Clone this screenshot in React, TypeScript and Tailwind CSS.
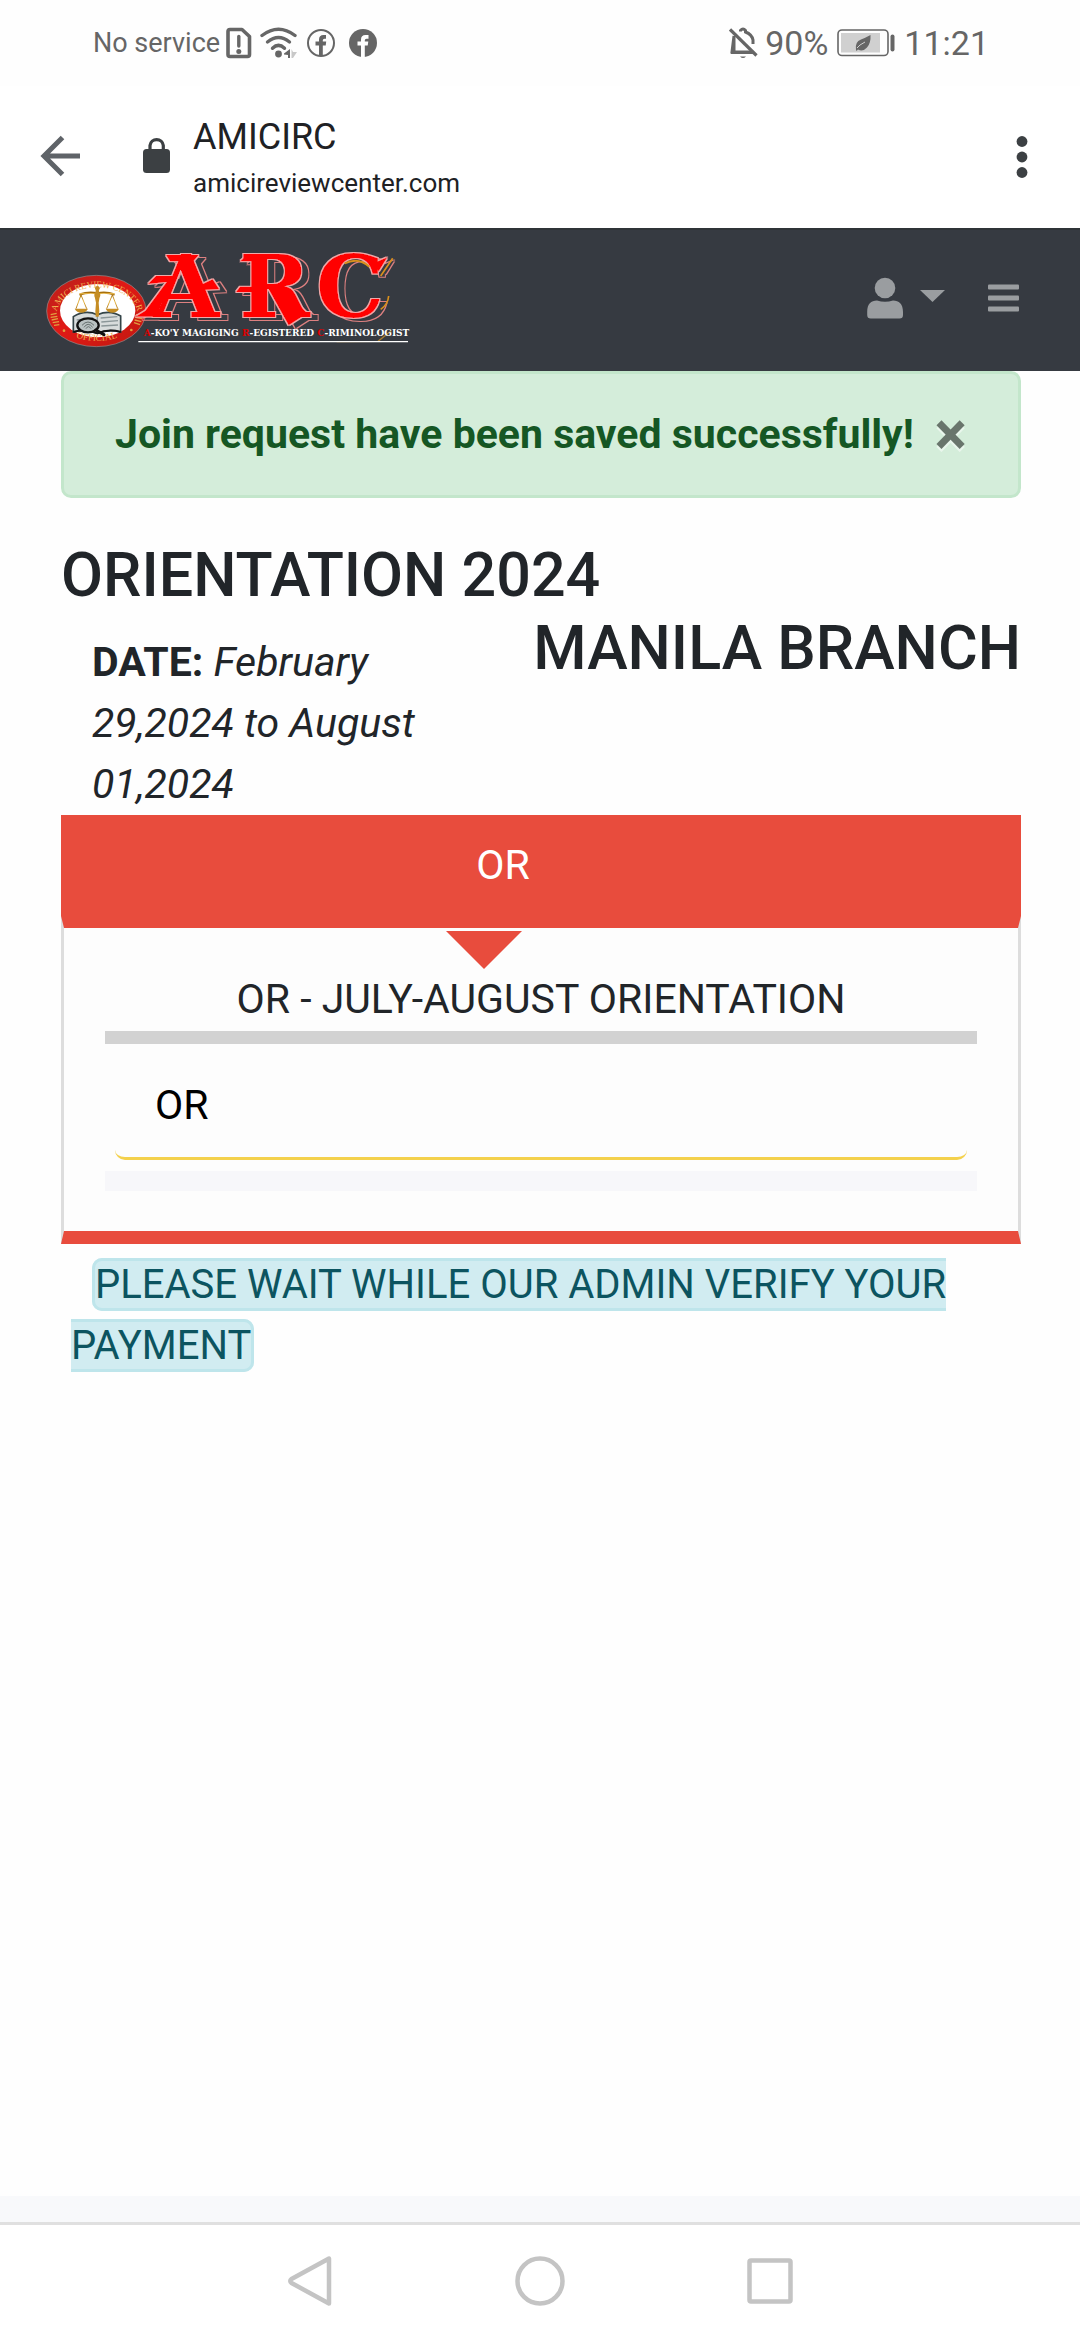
import React from "react";

function StatusBar() {
  return (
    <div className="flex h-[86px] items-center justify-between pl-[93px] pr-[91px] text-[#666666]">
      <div className="flex items-center">
        <span className="text-[27px] leading-8">No service</span>
        <svg className="ml-1.5" width="26" height="32" viewBox="0 0 26 32" fill="none">
          <path d="M4 2.500H16L23.500 9.500V27.500Q23.500 29.500 21.500 29.500H4Q2 29.500 2 27.500V4.500Q2 2.500 4 2.500Z" stroke="currentColor" strokeWidth="3.600" strokeLinejoin="round" />
          <path d="M12.800 9.500V19" stroke="currentColor" strokeWidth="3.400" strokeLinecap="round" />
          <circle cx="12.800" cy="24.500" r="2.500" fill="currentColor" />
        </svg>
        <svg className="ml-2" width="38" height="32" viewBox="0 0 38 32" fill="none">
          <g stroke="currentColor" strokeWidth="3.400" strokeLinecap="round">
            <path d="M2 8.500Q18.500 -4 35 8.500" />
            <path d="M7.500 15Q18.500 6 29.500 15" />
            <path d="M12.500 21.300Q18.500 15.500 24.500 21.300" />
          </g>
          <circle cx="18.500" cy="27" r="3.400" fill="currentColor" />
          <path d="M30 22V31H28V28L24 27.500V26.500Z" fill="currentColor" />
          <path d="M31.500 22L33 25H37L35 28L33 31H31.500Z" fill="#c8c8c8" />
        </svg>
        <svg className="ml-2" width="30" height="30" viewBox="0 0 30 30" fill="none">
          <circle cx="15" cy="15" r="13" stroke="currentColor" strokeWidth="2" />
          <path d="M13 28V17.500H9.500V13.500H13V11.500Q13 7 17.500 7H20V10.700H18.500Q16.800 10.700 16.800 12.300V13.500H20.200L19.700 17.500H16.800V28Z" fill="currentColor" />
        </svg>
        <svg className="ml-3" width="30" height="30" viewBox="0 0 30 30">
          <circle cx="15" cy="15" r="14" fill="currentColor" />
          <path d="M13 30V17.500H9.500V13.500H13V11.500Q13 7 17.500 7H20.500V10.700H18.500Q16.800 10.700 16.800 12.300V13.500H20.300L19.700 17.500H16.800V30Z" fill="#ffffff" />
        </svg>
      </div>
      <div className="flex items-center">
        <svg width="30" height="34" viewBox="0 0 30 34" fill="none">
          <path d="M5 10V25M5 10L3 26H24M11.500 5.500V4.500Q14 1.500 16.500 4.500V6Q23 8.500 24 14V18" stroke="currentColor" strokeWidth="3" />
          <path d="M2 26.500H24" stroke="currentColor" strokeWidth="3" />
          <path d="M3.500 2.500L28 26.500" stroke="#ffffff" strokeWidth="3.500" />
          <path d="M1 3.500L27.500 29.500" stroke="currentColor" strokeWidth="3.200" />
          <path d="M11 30.500H17Q14 33.500 11 30.500Z" fill="currentColor" />
        </svg>
        <span className="ml-1.5 text-[34px] leading-10">90%</span>
        <svg className="ml-2" width="60" height="30" viewBox="0 0 60 30" fill="none">
          <rect x="2" y="2" width="50" height="25.500" rx="4" stroke="currentColor" strokeWidth="1.600" />
          <rect x="5" y="5" width="39" height="19.500" fill="#d0d0d0" />
          <path d="M20 22Q18.500 14 25 11.500Q29 10 34.500 7Q35 15 31 19.500Q27 24 22 21.500L20.500 23Z" fill="currentColor" />
          <path d="M21 20Q23 17 29 14" stroke="#d0d0d0" strokeWidth="1" />
          <path d="M56.500 8.500V21.500" stroke="currentColor" strokeWidth="4" strokeLinecap="round" />
        </svg>
        <span className="ml-2 text-[34px] leading-10">11:21</span>
      </div>
    </div>
  );
}

function BrowserBar() {
  return (
    <div className="flex h-[142px] items-center bg-white pl-[38px]">
      <button aria-label="Back" className="text-[#5f6368]">
        <svg width="48" height="48" viewBox="0 0 48 48" fill="none" stroke="currentColor" strokeWidth="5">
          <path d="M42 23H6M24.500 4.500L6 23L24.500 41.500" />
        </svg>
      </button>
      <svg className="ml-14" width="30" height="40" viewBox="0 0 30 40">
        <rect x="1" y="12" width="27" height="24" rx="3.500" fill="#3c4043" />
        <path d="M8 13V8.500A6.700 6.700 0 0 1 21.300 8.500V13" stroke="#3c4043" strokeWidth="3.200" fill="none" />
      </svg>
      <div className="ml-[21px] flex flex-1 flex-col pt-1.5 text-[#202124]">
        <span className="text-[36px] leading-[46px]">AMICIRC</span>
        <span className="text-[26px] leading-[46px]">amicireviewcenter.com</span>
      </div>
      <button aria-label="More options" className="mr-12">
        <svg width="20" height="46" viewBox="0 0 20 46" fill="#3c4043">
          <circle cx="10" cy="7.500" r="5.400" />
          <circle cx="10" cy="23" r="5.400" />
          <circle cx="10" cy="38.500" r="5.400" />
        </svg>
      </button>
    </div>
  );
}

function Logo() {
  return (
    <svg className="h-[97px] w-[365px] overflow-visible" viewBox="45 78 1095 291" role="img" aria-label="ARC">
      <defs>
        <linearGradient id="gold" x1="0" x2="0" y1="0" y2="1">
          <stop offset="0" stopColor="#a8700c" />
          <stop offset="0.5" stopColor="#e8b84a" />
          <stop offset="1" stopColor="#b07818" />
        </linearGradient>
        <linearGradient id="ring" x1="0" x2="1" y1="0" y2="1">
          <stop offset="0" stopColor="#b5201a" />
          <stop offset="0.45" stopColor="#e01a16" />
          <stop offset="1" stopColor="#c01810" />
        </linearGradient>
        <filter id="outline" filterUnits="userSpaceOnUse" x="280" y="60" width="860" height="270">
          <feMorphology in="SourceAlpha" operator="dilate" radius="2" result="edge" />
          <feFlood floodColor="#f0a8a8" />
          <feComposite in2="edge" operator="in" result="rim" />
          <feMorphology in="SourceAlpha" operator="dilate" radius="3" result="wide" />
          <feComposite in="wide" in2="SourceAlpha" operator="out" />
          <feOffset dx="20" dy="9" result="contour" />
          <feFlood floodColor="#dd8080" />
          <feComposite in2="contour" operator="in" result="echo" />
          <feMerge>
            <feMergeNode in="echo" />
            <feMergeNode in="rim" />
            <feMergeNode in="SourceGraphic" />
          </feMerge>
        </filter>
        <path id="sealTop" d="M79 268A121 83 0 0 1 323 268" />
        <path id="sealBottom" d="M64 262A137 94 0 0 0 336 262" />
      </defs>

      <ellipse cx="199" cy="255" rx="149" ry="107" fill="url(#ring)" stroke="#8f8f8f" strokeWidth="2" />
      <ellipse cx="203" cy="254" rx="113" ry="80" fill="#ffffff" />
      <text fontFamily="Liberation Serif" fontSize="27" fill="#f0b050">
        <textPath href="#sealTop" startOffset="50%" textAnchor="middle">AMICI REVIEW CENTER</textPath>
      </text>
      <text fontFamily="Liberation Serif" fontSize="28" fill="#f0b050">
        <textPath href="#sealBottom" startOffset="50%" textAnchor="middle">OFFICIAL</textPath>
      </text>
      <g fill="none" stroke="#e0a040" strokeWidth="4">
        <path d="M62 266L80 262M62 274L82 271M65 282L84 278M68 290L87 287M72 298L88 296" />
        <path d="M318 266L336 270M316 274L336 278M314 282L334 287M312 290L330 296" />
      </g>
      <circle cx="102" cy="314" r="4" fill="#e0a040" />
      <circle cx="304" cy="312" r="4" fill="#e0a040" />

      <path d="M130 272Q165 250 202 266Q240 250 272 270V318Q235 308 202 322Q168 308 130 318Z" fill="#d8dcdc" stroke="#344448" strokeWidth="5" />
      <path d="M202 267V318M212 276L262 272M214 288L264 284M214 300L264 297M140 282L190 276" stroke="#8b9698" strokeWidth="4" />
      <path d="M130 318Q168 308 202 322Q235 308 272 318" stroke="#111111" strokeWidth="6" fill="none" />
      <ellipse cx="174" cy="298" rx="32" ry="21" fill="#b9c2c2" stroke="#111111" strokeWidth="7" />
      <path d="M156 298Q174 278 192 298M162 304Q174 286 188 304M168 308Q175 296 183 308" stroke="#66706f" strokeWidth="3" fill="none" />
      <path d="M197 312L222 326" stroke="#111111" strokeWidth="9" strokeLinecap="round" />

      <g fill="none" stroke="url(#gold)">
        <path d="M148 206Q176 196 202 202Q228 196 254 206" strokeWidth="7" />
        <path d="M153 207L138 248M153 207L170 248M247 207L230 248M247 207L263 248" strokeWidth="3" />
      </g>
      <g fill="#c58d24">
        <path d="M134 248H174Q168 260 154 260Q140 260 134 248Z" />
        <path d="M227 248H267Q261 260 247 260Q233 260 227 248Z" />
        <path d="M198 188H206L209 212L206 230L208 256L206 272H197L196 256L198 230L194 212Z" />
        <circle cx="202" cy="187" r="7" />
        <circle cx="202" cy="207" r="9" />
      </g>

      <g filter="url(#outline)" fill="#ff0000" fontFamily="DejaVu Serif" fontWeight="700" fontSize="256">
        <text x="370" y="272">A</text>
        <text x="628" y="272">R</text>
        <text x="858" y="272">C</text>
        <path d="M408 87H506L490 106H420Z" />
        <path d="M316 272L346 254L410 168L354 174L378 150L440 150L396 230L380 272Z" />
        <path d="M500 182L548 160L568 190L518 192Z" />
        <path d="M746 178L832 262L776 298L716 190Z" />
        <path d="M630 106L646 92L690 88V106Z" />
        <path d="M618 198L630 182H672V198Z" />
        <path d="M1072 94L1046 136L1024 114Z" />
      </g>
      <path d="M1088 97L1052 150M1076 210Q1074 236 1052 250" stroke="#d9901c" strokeWidth="5" fill="none" />
      <path d="M944 112Q985 92 1018 122" stroke="#d9901c" strokeWidth="6" fill="none" />

      <path d="M920 347L1044 346L1084 314" stroke="#a67a2c" strokeWidth="4" fill="none" />
      <text x="341" y="330" fontFamily="DejaVu Serif" fontWeight="700" fontSize="27" fill="#ffffff">
        <tspan fill="#e00000">A</tspan>-KO'Y MAGIGING <tspan fill="#e00000">R</tspan>-EGISTERED <tspan fill="#e00000">C</tspan>-RIMINOLOGIST
      </text>
      <path d="M325 347H1134" stroke="#ffffff" strokeWidth="3.500" />
    </svg>
  );
}

function SiteNav() {
  return (
    <nav className="flex h-[143px] items-center justify-between border-t-2 border-[#2f3438] bg-[#363a41] pl-[45px] pr-[59px] text-[#9a9da0]">
      <a href="#home">
        <Logo />
      </a>
      <div className="flex items-center pb-1.5">
        <button aria-label="Account" className="flex items-center">
          <svg width="38" height="44" viewBox="0 0 38 44" fill="currentColor">
            <circle cx="19" cy="12" r="10.300" />
            <path d="M1.200 36C1.200 28 5 24.500 11 24.500Q19 27 27 24.500C33 24.500 37 28 37 36V39Q37 42.500 33.500 42.500H4.700Q1.200 42.500 1.200 39Z" />
          </svg>
          <svg className="ml-4" width="25" height="16" viewBox="0 0 25 16" fill="currentColor">
            <path d="M0 0H25L12.500 12Z" />
          </svg>
        </button>
        <button aria-label="Menu" className="ml-10">
          <svg width="36" height="30" viewBox="0 0 36 30" fill="currentColor">
            <rect x="3" y="1.500" width="31" height="5" rx="1" />
            <rect x="3" y="12.500" width="31" height="5" rx="1" />
            <rect x="3" y="23.500" width="31" height="5" rx="1" />
          </svg>
        </button>
      </div>
    </nav>
  );
}

function SystemNav() {
  return (
    <div className="flex h-[118px] items-center justify-center gap-[178px] border-t-[3px] border-[#e0e0e0] bg-white pb-1 text-[#c4c4c4]">
      <button aria-label="System back">
        <svg width="52" height="52" viewBox="0 0 52 52" fill="none" stroke="currentColor" strokeWidth="4.500" strokeLinejoin="round">
          <path d="M45 3.500V48.500L7.500 28Q5 26 7.500 24Z" />
        </svg>
      </button>
      <button aria-label="Home">
        <svg width="52" height="52" viewBox="0 0 52 52" fill="none" stroke="currentColor" strokeWidth="4.500">
          <circle cx="26" cy="26" r="22.500" />
        </svg>
      </button>
      <button aria-label="Recent apps">
        <svg width="52" height="52" viewBox="0 0 52 52" fill="none" stroke="currentColor" strokeWidth="4.500">
          <rect x="5.500" y="5.500" width="41" height="41" rx="1.500" />
        </svg>
      </button>
    </div>
  );
}

export default function App() {
  return (
    <div className="flex min-h-screen flex-col bg-[#fefefe] font-[Roboto,sans-serif] text-[41px] leading-[61px] text-[#212529]">
      <StatusBar />
      <BrowserBar />
      <SiteNav />

      <main className="flex-1 pl-[61px] pr-[59px]">
        <div role="alert" className="flex items-center justify-between rounded-[10px] border-[3px] border-[#c3e6cb] bg-[#d4edda] px-[51px] py-[30px] font-bold text-[#155724]">
          <span>Join request have been saved successfully!</span>
          <button aria-label="Close" className="h-[61px] text-[61px] leading-[61px] text-black opacity-50 [text-shadow:0_3px_0_#fff]">
            ×
          </button>
        </div>

        <h4 className="mt-[41px] text-[61px] font-medium leading-[73px]">ORIENTATION 2024</h4>
        <div className="flex items-start justify-between">
          <p className="flex-1 pl-[31px] pr-10 pt-5">
            <b>DATE:</b> <i>February 29,2024 to August 01,2024</i>
          </p>
          <h4 className="text-[61px] font-medium leading-[73px]">MANILA BRANCH</h4>
        </div>

        <section>
          <h5 className="bg-[#e84c3d] py-5 pr-[76px] text-center text-white">OR</h5>
          <div className="border-x-[3px] border-b-[13px] border-t-[12px] border-x-[#dddddd] border-y-[#e84c3d] bg-[#fdfdfd] px-[41px] pb-10 pt-[3px]">
            <div className="flex justify-center pr-[114px]">
              <svg width="76" height="38" viewBox="0 0 76 38">
                <path d="M0 0H76L38 38Z" fill="#e84c3d" />
              </svg>
            </div>
            <p className="text-center">OR - JULY-AUGUST ORIENTATION</p>
            <div className="mt-px h-[13px] bg-[#d2d2d2]" />
            <input
              type="text"
              aria-label="Review program"
              defaultValue="OR"
              className="mx-2.5 mt-2 block h-[108px] w-[calc(100%-20px)] rounded-[10px] border-b-[3px] border-[#f4d14c] bg-transparent px-10 text-black outline-none"
            />
            <div className="mt-[11px] h-5 bg-[#f7f7fa]" />
          </div>
          <p className="pl-2.5 pt-2.5 indent-[21px]">
            <span className="rounded-[10px] border-[3px] border-[#bee5eb] bg-[#d1ecf1] text-[40px] text-[#0c5460]">
              PLEASE WAIT WHILE OUR ADMIN VERIFY YOUR PAYMENT
            </span>
          </p>
        </section>
      </main>

      <footer className="h-[26px] bg-[#f8f9fb]" />
      <SystemNav />
    </div>
  );
}
